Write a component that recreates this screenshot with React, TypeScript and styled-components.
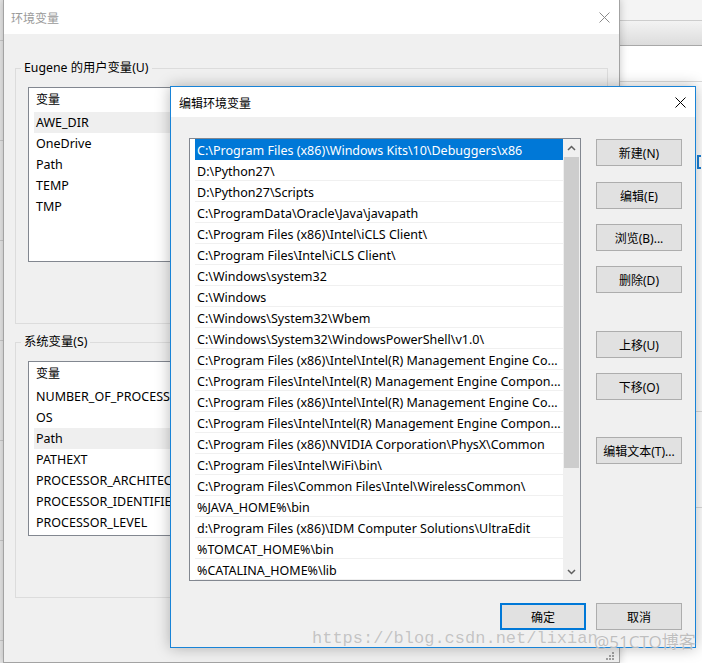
import React from 'react';
import styled, { createGlobalStyle } from 'styled-components';

const Global = createGlobalStyle`
  html, body { margin: 0; padding: 0; }
  body {
    width: 702px; height: 663px; overflow: hidden; background: #ffffff;
    font-family: "Noto Sans", "Noto Sans CJK SC", sans-serif;
    font-size: 12px; color: #000;
  }
  * { box-sizing: border-box; }
`;

const Desktop = styled.div`
  position: relative;
  width: 702px;
  height: 663px;
  overflow: hidden;
  background: #ffffff;
`;

/* ---------- background window on the right ---------- */
const BgWindow = styled.div`
  position: absolute;
  left: 590px;
  top: 0;
  width: 112px;
  height: 663px;
  background: #fff;
  display: flex;
  flex-direction: column;
`;
const BgTop = styled.div`
  height: 21px;
  background: #f4f4f4;
  border-bottom: 1px solid #cdcdcd;
`;
const BgBand = styled.div`
  height: 25px;
  background: linear-gradient(#f3f3f3, #dcdcdc);
  border-bottom: 1px solid #a8a8a8;
`;
const BgPane = styled.div<{ $h: number }>`
  height: ${(p) => p.$h}px;
  flex: none;
  background: #fff;
  border-bottom: 1px solid #dadada;
  display: flex;
  align-items: flex-start;
`;
const Bracket = styled.div`
  margin: 73px 0 0 107px;
  width: 4px;
  height: 14px;
  border: 2px solid #1b7fd4;
  border-right: none;
`;

const LeftStrip = styled.div`
  position: absolute;
  left: 0;
  top: 0;
  width: 4px;
  height: 663px;
  background: repeating-linear-gradient(#e6e6e6 0 40px, #c8c8c8 40px 41px, #e6e6e6 41px 100px);
`;

/* ---------- back window 环境变量 ---------- */
const EnvWindow = styled.div`
  position: absolute;
  left: 3px;
  top: -1px;
  width: 617px;
  height: 664px;
  border: 1px solid #a3a3a3;
  background: #f0f0f0;
  box-shadow: 0 0 8px rgba(0, 0, 0, 0.22);
  display: flex;
  flex-direction: column;
`;

const TitleBar = styled.div<{ $h: number; $inactive?: boolean }>`
  height: ${(p) => p.$h}px;
  flex: none;
  background: #fff;
  display: flex;
  align-items: center;
  justify-content: space-between;
  padding: 0 9px 0 7px;
  color: ${(p) => (p.$inactive ? '#9a9a9a' : '#000')};
  font-family: "Noto Sans CJK SC", sans-serif;
  font-size: 12px;
`;

const EnvBody = styled.div`
  flex: 1;
  padding: 0 11px;
  display: flex;
  flex-direction: column;
`;

const Group = styled.div<{ $top: number }>`
  margin-top: ${(p) => p.$top}px;
  width: 593px;
  height: 256px;
  border: 1px solid #dcdcdc;
  padding: 0 12px;
  display: flex;
  flex-direction: column;
`;

const Legend = styled.div`
  align-self: flex-start;
  margin: -9px 0 0 -7px;
  padding: 0 3px;
  height: 16px;
  line-height: 16px;
  background: #f0f0f0;
  font-size: 12.3px;
`;

const VarList = styled.div`
  margin-top: 11px;
  width: 566px;
  height: 175px;
  background: #fff;
  border: 1px solid #828790;
  display: flex;
  flex-direction: column;
`;

const VarHeader = styled.div`
  height: 24px;
  line-height: 22px;
  padding-left: 7px;
  font-family: "Noto Sans CJK SC", sans-serif;
`;

const VarRow = styled.div<{ $hl?: boolean }>`
  height: 21px;
  line-height: 21px;
  margin-left: 5px;
  padding-left: 2px;
  font-size: 12.5px;
  background: ${(p) => (p.$hl ? '#efefef' : 'transparent')};
  white-space: nowrap;
`;

const Grip = styled.svg`
  position: absolute;
  right: 5px;
  bottom: 2px;
`;

/* ---------- front dialog 编辑环境变量 ---------- */
const Dialog = styled.div`
  position: absolute;
  left: 170px;
  top: 86px;
  width: 526px;
  height: 562px;
  border: 1px solid #1883d7;
  background: #f0f0f0;
  box-shadow: 0 0 14px rgba(0, 0, 0, 0.28);
  display: flex;
  flex-direction: column;
`;

const DialogBody = styled.div`
  flex: 1;
  padding: 21px 13px 0 18px;
  display: flex;
  flex-direction: column;
`;

const MainRow = styled.div`
  display: flex;
  gap: 15px;
`;

const PathList = styled.div`
  width: 392px;
  height: 443px;
  background: #fff;
  border: 1px solid #828790;
  display: flex;
`;

const PathItems = styled.div`
  flex: 1;
  min-width: 0;
  display: flex;
  flex-direction: column;
`;

const PathRow = styled.div<{ $sel?: boolean }>`
  height: 21px;
  flex: none;
  padding-top: 2px;
  line-height: 19px;
  font-size: 12.5px;
  margin-left: 5px;
  padding-left: 2px;
  border-bottom: 1px solid ${(p) => (p.$sel ? '#0078d7' : '#f0f0f0')};
  background: ${(p) => (p.$sel ? '#0078d7' : '#fff')};
  color: ${(p) => (p.$sel ? '#fff' : '#000')};
  white-space: nowrap;
  overflow: hidden;
  text-overflow: ellipsis;
`;

const ScrollBar = styled.div`
  width: 17px;
  flex: none;
  background: #f0f0f0;
  display: flex;
  flex-direction: column;
`;

const ScrollArrow = styled.div`
  height: 17px;
  flex: none;
  display: flex;
  align-items: center;
  justify-content: center;
`;

const ScrollTrack = styled.div`
  flex: 1;
  padding: 1px 1px 0;
`;

const Thumb = styled.div`
  height: 311px;
  background: #cdcdcd;
`;

const ButtonColumn = styled.div`
  padding-top: 1px;
  display: flex;
  flex-direction: column;
`;

const Button = styled.button<{ $mt?: number; $primary?: boolean }>`
  margin-top: ${(p) => p.$mt ?? 0}px;
  width: 86px;
  height: 27px;
  padding: 0;
  background: #e1e1e1;
  border: ${(p) => (p.$primary ? '2px solid #0078d7' : '1px solid #adadad')};
  font-family: "Noto Sans", "Noto Sans CJK SC", sans-serif;
  font-size: 12px;
  color: #000;
  display: flex;
  align-items: center;
  justify-content: center;
`;

const BottomRow = styled.div`
  margin-top: 22px;
  display: flex;
  justify-content: flex-end;
  gap: 10px;
`;

/* ---------- watermark ---------- */
const WatermarkUrl = styled.div`
  position: absolute;
  left: 312px;
  top: 629px;
  font-family: "Liberation Mono", monospace;
  font-size: 17px;
  line-height: 20px;
  color: rgba(140, 140, 140, 0.45);
  white-space: nowrap;
`;

const WatermarkBrand = styled.div`
  position: absolute;
  left: 594px;
  top: 631px;
  font-family: "Noto Sans", "Noto Sans CJK SC", sans-serif;
  font-size: 17px;
  line-height: 22px;
  color: rgba(170, 170, 170, 0.75);
  text-shadow: 0 0 1px #fff;
  white-space: nowrap;
`;

const CloseIcon = ({ color }: { color: string }) => (
  <svg width="11" height="11" viewBox="0 0 11 11">
    <path d="M0.5 0.5 L10.5 10.5 M10.5 0.5 L0.5 10.5" stroke={color} strokeWidth="1" fill="none" />
  </svg>
);

const Chevron = ({ up }: { up?: boolean }) => (
  <svg width="9" height="6" viewBox="0 0 9 6">
    <path
      d={up ? 'M1 5 L4.5 1.5 L8 5' : 'M1 1 L4.5 4.5 L8 1'}
      stroke="#606060"
      strokeWidth="1.5"
      fill="none"
    />
  </svg>
);

const paths = [
  'C:\\Program Files (x86)\\Windows Kits\\10\\Debuggers\\x86',
  'D:\\Python27\\',
  'D:\\Python27\\Scripts',
  'C:\\ProgramData\\Oracle\\Java\\javapath',
  'C:\\Program Files (x86)\\Intel\\iCLS Client\\',
  'C:\\Program Files\\Intel\\iCLS Client\\',
  'C:\\Windows\\system32',
  'C:\\Windows',
  'C:\\Windows\\System32\\Wbem',
  'C:\\Windows\\System32\\WindowsPowerShell\\v1.0\\',
  'C:\\Program Files (x86)\\Intel\\Intel(R) Management Engine Co...',
  'C:\\Program Files\\Intel\\Intel(R) Management Engine Compon...',
  'C:\\Program Files (x86)\\Intel\\Intel(R) Management Engine Co...',
  'C:\\Program Files\\Intel\\Intel(R) Management Engine Compon...',
  'C:\\Program Files (x86)\\NVIDIA Corporation\\PhysX\\Common',
  'C:\\Program Files\\Intel\\WiFi\\bin\\',
  'C:\\Program Files\\Common Files\\Intel\\WirelessCommon\\',
  '%JAVA_HOME%\\bin',
  'd:\\Program Files (x86)\\IDM Computer Solutions\\UltraEdit',
  '%TOMCAT_HOME%\\bin',
  '%CATALINA_HOME%\\lib',
];

const userVars = ['AWE_DIR', 'OneDrive', 'Path', 'TEMP', 'TMP'];
const sysVars = [
  'NUMBER_OF_PROCESSORS',
  'OS',
  'Path',
  'PATHEXT',
  'PROCESSOR_ARCHITECTURE',
  'PROCESSOR_IDENTIFIER',
  'PROCESSOR_LEVEL',
];

const sideButtons: { label: string; mt: number }[] = [
  { label: '新建(N)', mt: 0 },
  { label: '编辑(E)', mt: 16 },
  { label: '浏览(B)...', mt: 15 },
  { label: '删除(D)', mt: 15 },
  { label: '上移(U)', mt: 38 },
  { label: '下移(O)', mt: 15 },
  { label: '编辑文本(T)...', mt: 37 },
];

export default function App() {
  return (
    <Desktop>
      <Global />
      <BgWindow>
        <BgTop />
        <BgBand />
        <BgPane $h={36} />
        <BgPane $h={330}>
          <Bracket />
        </BgPane>
        <BgPane $h={96} />
      </BgWindow>
      <LeftStrip />

      <EnvWindow>
        <TitleBar $h={34} $inactive>
          <span>环境变量</span>
          <CloseIcon color="#8a8a8a" />
        </TitleBar>
        <EnvBody>
          <Group $top={34}>
            <Legend>Eugene 的用户变量(U)</Legend>
            <VarList>
              <VarHeader>变量</VarHeader>
              {userVars.map((v, i) => (
                <VarRow key={v} $hl={i === 0}>
                  {v}
                </VarRow>
              ))}
            </VarList>
          </Group>
          <Group $top={18}>
            <Legend>系统变量(S)</Legend>
            <VarList>
              <VarHeader>变量</VarHeader>
              {sysVars.map((v, i) => (
                <VarRow key={v} $hl={i === 2}>
                  {v}
                </VarRow>
              ))}
            </VarList>
          </Group>
        </EnvBody>
        <Grip width="10" height="10" viewBox="0 0 10 10">
          {[
            [8, 2],
            [8, 5],
            [5, 5],
            [8, 8],
            [5, 8],
            [2, 8],
          ].map(([x, y]) => (
            <rect key={`${x}-${y}`} x={x} y={y} width="2" height="2" fill="#a0a0a0" />
          ))}
        </Grip>
      </EnvWindow>

      <Dialog>
        <TitleBar $h={30}>
          <span style={{ paddingLeft: 1 }}>编辑环境变量</span>
          <CloseIcon color="#000" />
        </TitleBar>
        <DialogBody>
          <MainRow>
            <PathList>
              <PathItems>
                {paths.map((p, i) => (
                  <PathRow key={i} $sel={i === 0}>
                    {p}
                  </PathRow>
                ))}
              </PathItems>
              <ScrollBar>
                <ScrollArrow>
                  <Chevron up />
                </ScrollArrow>
                <ScrollTrack>
                  <Thumb />
                </ScrollTrack>
                <ScrollArrow>
                  <Chevron />
                </ScrollArrow>
              </ScrollBar>
            </PathList>
            <ButtonColumn>
              {sideButtons.map((b) => (
                <Button key={b.label} $mt={b.mt}>
                  {b.label}
                </Button>
              ))}
            </ButtonColumn>
          </MainRow>
          <BottomRow>
            <Button $primary>确定</Button>
            <Button>取消</Button>
          </BottomRow>
        </DialogBody>
      </Dialog>

      <WatermarkUrl>https://blog.csdn.net/lixian</WatermarkUrl>
      <WatermarkBrand>@51CTO博客</WatermarkBrand>
    </Desktop>
  );
}
